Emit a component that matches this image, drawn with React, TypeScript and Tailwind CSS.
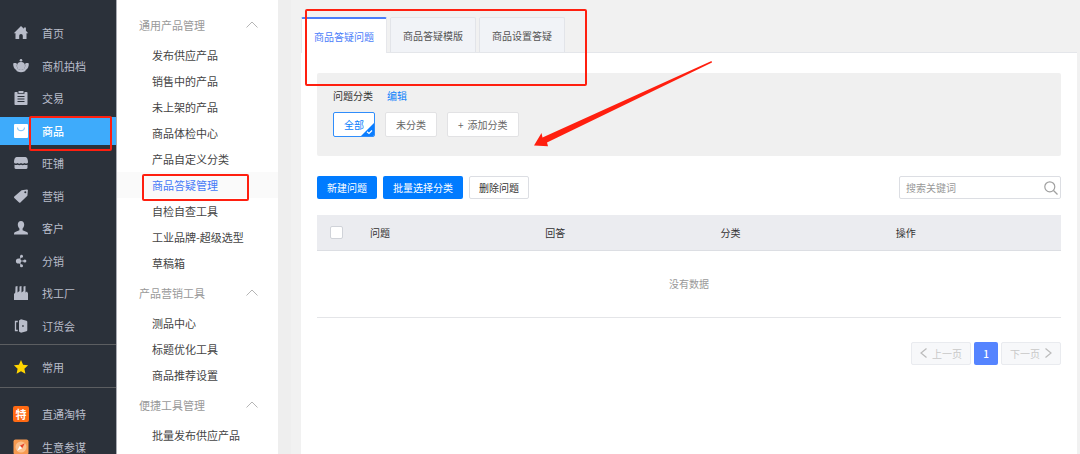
import { useState } from 'react';
import type { ReactNode } from 'react';
import clsx from 'clsx';

type NavItem = { label: string; icon: ReactNode };

const svgProps = { viewBox: '0 0 16 16', fill: 'currentColor', className: 'size-4 shrink-0', 'aria-hidden': true };

const mainNav: NavItem[] = [
  {
    label: '首页',
    icon: (
      <svg {...svgProps}>
        <path d="M8 1 .8 8.200h1.700V14h3.700v-3.200a1.800 1.800 0 0 1 3.600 0V14h3.700V8.200h1.700L12.900 5.800V2.400h-2v1.400z" />
      </svg>
    ),
  },
  {
    label: '商机拍档',
    icon: (
      <svg {...svgProps}>
        <circle cx="8" cy="2.200" r="1.300" />
        <circle cx="8" cy="8" r="4" />
        <path d="M.2 5.400c1.400-.7 3.200-.4 3.800.5-.8 2.700.4 5.500 4 6.300 3.600-.8 4.800-3.600 4-6.300.6-.9 2.400-1.200 3.800-.5.2 2.800-1 5.300-3.100 6.700H3.300C1.200 10.700 0 8.200.2 5.400z" />
        <path d="M3.300 12h9.400c0 1.400-2 2.200-4.700 2.200S3.300 13.400 3.300 12z" />
      </svg>
    ),
  },
  {
    label: '交易',
    icon: (
      <svg {...svgProps}>
        <path
          fillRule="evenodd"
          d="M2.300 2h2.200v1.800h7V2h2.200c.5 0 .8.300.8.800v11.400c0 .5-.3.800-.8.800H2.300c-.5 0-.8-.3-.8-.8V2.800c0-.5.300-.8.800-.8zm2.200 4v1h7V6zm0 2.500v1h7v-1zm0 2.500v1h7v-1z"
        />
        <path d="M5.500 1h5v2h-5z" />
      </svg>
    ),
  },
  {
    label: '商品',
    icon: (
      <svg {...svgProps}>
        <rect x="1" y="1" width="14" height="14" rx="1" />
        <path d="M4.500 4.500c.2 4.200 6.800 4.200 7 0" fill="none" stroke="#8ccbfa" strokeWidth="1.200" />
      </svg>
    ),
  },
  {
    label: '旺铺',
    icon: (
      <svg {...svgProps}>
        <path d="M3.500 2h9C14 2 15 4.500 15 7c0 1.600-2.200 2-3.500.9-1 1.100-2.600 1.100-3.500 0-.9 1.100-2.500 1.100-3.500 0C3.200 9 1 8.600 1 7c0-2.500 1-5 2.500-5z" />
        <path d="M1.500 9.800c1 .4 2.200.4 3 0 1 .6 2.500.6 3.500 0 1 .6 2.500.6 3.500 0 .8.400 2 .4 3 0v3c0 .7-.6 1.200-1.200 1.200H2.700c-.6 0-1.200-.5-1.200-1.200z" />
      </svg>
    ),
  },
  {
    label: '营销',
    icon: (
      <svg {...svgProps}>
        <path
          fillRule="evenodd"
          d="M8.600 2.200 14 1.500c.5 0 .9.300.9.800L14.400 7.700 7.400 14.500c-.4.400-.9.400-1.300 0L1.300 9.900c-.4-.4-.4-.9 0-1.300zM12.300 3.300a1 1 0 1 0 0 2 1 1 0 0 0 0-2z"
        />
      </svg>
    ),
  },
  {
    label: '客户',
    icon: (
      <svg {...svgProps}>
        <path d="M8 1c2 0 3.200 1.500 3.200 3.600 0 1.700-.7 3-1.600 3.900v1.700l4.200 1.700c.8.300 1.200.9 1.200 2.500H1c0-1.600.4-2.200 1.200-2.500l4.200-1.700V8.500c-.9-.9-1.600-2.200-1.600-3.900C4.800 2.500 6 1 8 1z" />
      </svg>
    ),
  },
  {
    label: '分销',
    icon: (
      <svg {...svgProps}>
        <circle cx="5.500" cy="8" r="2.600" />
        <circle cx="8.500" cy="3.200" r="1.500" />
        <circle cx="11.800" cy="8" r="1.600" />
        <circle cx="8.500" cy="12.800" r="1.500" />
        <path d="m8.500 3.200-3 4.800h6M5.500 8l3 4.800" fill="none" stroke="currentColor" strokeWidth=".9" />
      </svg>
    ),
  },
  {
    label: '找工厂',
    icon: (
      <svg {...svgProps}>
        <path d="M1 15V9l1.300-1.500L2.500 1.500 4.500 1v6.500l2-1.500V1.500L8.500 1v6.500l2-1.500V1.500l2-.5v6.500L14 6.500l1 2V15z" />
      </svg>
    ),
  },
  {
    label: '订货会',
    icon: (
      <svg {...svgProps}>
        <path
          fillRule="evenodd"
          d="m6 2.500 2-1.200 5.500 1.500c.5.200.8.500.8 1v8.400c0 .5-.3.800-.8 1L8 14.700l-2-1.200zm3.200 4.700v1.600h1.500V7.200z"
        />
        <path d="M4.800 3.500H2.500v9h2.300" fill="none" stroke="currentColor" strokeWidth="1.300" />
      </svg>
    ),
  },
];

const favoriteNav: NavItem[] = [
  {
    label: '常用',
    icon: (
      <svg viewBox="0 0 16 16" fill="#ffd500" className="size-4 shrink-0" aria-hidden>
        <path d="m8 1 2.100 4.700 5 .6-3.700 3.400 1 5.100L8 12.300l-4.400 2.500 1-5.100L.9 6.300l5-.6z" />
      </svg>
    ),
  },
];

const appNav: NavItem[] = [
  {
    label: '直通淘特',
    icon: (
      <span className="flex size-4 shrink-0 items-center justify-center rounded-xs bg-[#ff6a13] text-[11px] leading-none font-bold text-white">
        特
      </span>
    ),
  },
  {
    label: '生意参谋',
    icon: (
      <svg viewBox="0 0 16 16" className="size-4 shrink-0" aria-hidden>
        <rect x=".5" y=".5" width="15" height="15" rx="2" fill="#f79a50" />
        <circle cx="8" cy="8" r="5.500" fill="#fcc08c" />
        <path d="M11.800 4.200 9.200 9.200 6.800 6.800z" fill="#e8442c" />
        <path d="m4.200 11.800 2.600-5 2.400 2.400z" fill="#fff" />
      </svg>
    ),
  },
];

const menuGroups = [
  {
    title: '通用产品管理',
    items: [
      '发布供应产品',
      '销售中的产品',
      '未上架的产品',
      '商品体检中心',
      '产品自定义分类',
      '商品答疑管理',
      '自检自查工具',
      '工业品牌-超级选型',
      '草稿箱',
    ],
  },
  { title: '产品营销工具', items: ['测品中心', '标题优化工具', '商品推荐设置'] },
  { title: '便捷工具管理', items: ['批量发布供应产品'] },
];

const tabs = ['商品答疑问题', '商品答疑模版', '商品设置答疑'];
const columns = ['问题', '回答', '分类', '操作'];

function NavList({ items }: { items: NavItem[] }) {
  return (
    <ul>
      {items.map((item) => (
        <li key={item.label} className="odd:mb-[5px] even:mb-1">
          <a
            href="#"
            className={clsx(
              'flex h-7 items-center gap-3 pl-[13px] text-[11px]',
              item.label === '商品' ? 'bg-[#3eabfb] font-medium text-white' : 'text-[#b9bdca]',
            )}
          >
            {item.icon}
            <span className="pl-px">{item.label}</span>
          </a>
        </li>
      ))}
    </ul>
  );
}

function Sidebar() {
  return (
    <nav className="w-[117px] shrink-0 overflow-hidden border-r border-[#a9abb2] bg-[#2b313a] pt-[19px]">
      <NavList items={mainNav} />
      <div className="border-y border-[#5c5e61] pt-2 pb-px">
        <NavList items={favoriteNav} />
      </div>
      <div className="pt-3">
        <NavList items={appNav} />
      </div>
    </nav>
  );
}

function SubMenu() {
  return (
    <nav className="w-[161px] shrink-0 overflow-hidden bg-white pt-2 text-[11px]">
      {menuGroups.map((group) => (
        <section key={group.title}>
          <button type="button" className="flex h-[34px] w-full items-center justify-between pr-5 pl-[22px] text-[#999]">
            {group.title}
            <svg viewBox="0 0 12 8" className="h-2 w-3" fill="none" stroke="#b5b5b5" aria-hidden>
              <path d="M.5 6.500 6 1l5.500 5.500" />
            </svg>
          </button>
          <ul>
            {group.items.map((item) => (
              <li key={item}>
                <a
                  href="#"
                  className={clsx(
                    'flex h-[26px] items-center pl-[35px]',
                    item === '商品答疑管理' ? 'bg-[#fafafa] text-[#4479f7]' : 'text-[#444]',
                  )}
                >
                  {item}
                </a>
              </li>
            ))}
          </ul>
        </section>
      ))}
    </nav>
  );
}

function CategoryPanel() {
  return (
    <section className="rounded-xs bg-[#f0f0f0] px-4 pt-[15px] pb-[19px]">
      <div className="flex h-[15px] items-center gap-[14px]">
        <span className="text-[#333]">问题分类</span>
        <a href="#" className="text-[#0b80fb]">
          编辑
        </a>
      </div>
      <div className="mt-[9px] flex gap-[10px]">
        <button
          type="button"
          className="relative h-[25px] overflow-hidden rounded-xs border border-[#2f8dfb] bg-white px-[10px] text-[#0b80fb]"
        >
          全部
          <svg viewBox="0 0 13 13" className="absolute right-0 bottom-0 size-[13px]" aria-hidden>
            <path d="M13 0v13H0z" fill="#0a7dff" />
            <path d="m6 8.700 2 1.800 3-3" fill="none" stroke="#fff" strokeWidth="1.200" />
          </svg>
        </button>
        <button type="button" className="h-[25px] rounded-xs border border-[#e2e2e4] bg-white px-[10px] text-[#666]">
          未分类
        </button>
        <button
          type="button"
          className="flex h-[25px] items-center gap-1 rounded-xs border border-[#e2e2e4] bg-white px-[10px] text-[#666]"
        >
          <span>+</span>
          添加分类
        </button>
      </div>
    </section>
  );
}

function Toolbar() {
  return (
    <div className="mt-5 flex items-center justify-between">
      <div className="flex gap-[6px]">
        <button type="button" className="h-[23px] rounded-xs bg-[#007bff] px-[10px] text-white">
          新建问题
        </button>
        <button type="button" className="h-[23px] rounded-xs bg-[#007bff] px-[10px] text-white">
          批量选择分类
        </button>
        <button type="button" className="h-[23px] rounded-xs border border-[#dcdee3] bg-white px-[9px] text-[#333]">
          删除问题
        </button>
      </div>
      <label className="flex h-[23px] w-[162px] items-center rounded-xs border border-[#dcdee3] bg-white pr-[2px] pl-[6px]">
        <input
          type="search"
          aria-label="搜索关键词"
          placeholder="搜索关键词"
          className="min-w-0 flex-1 outline-none placeholder:text-[#999]"
        />
        <svg viewBox="0 0 14 14" className="size-[14px]" fill="none" stroke="#a0a0a0" strokeWidth="1.200" aria-hidden>
          <circle cx="5.800" cy="5.800" r="5" />
          <path d="m9.500 9.500 4 4" />
        </svg>
      </label>
    </div>
  );
}

function QuestionTable() {
  return (
    <table className="mt-4 w-full table-fixed text-left">
      <thead>
        <tr className="h-[35px] border-b border-[#dcdee3] bg-[#ebecf0]">
          <th className="w-[43px] pl-[13px]">
            <input
              type="checkbox"
              aria-label="全选"
              className="block size-[13px] appearance-none rounded-xs border border-[#d0d3d9] bg-white"
            />
          </th>
          {columns.map((name) => (
            <th key={name} className="px-[10px] font-normal text-[#333]">
              {name}
            </th>
          ))}
        </tr>
      </thead>
      <tbody>
        <tr className="h-[67px] border-b border-[#e4e5e8]">
          <td colSpan={5} className="text-center text-[#999]">
            没有数据
          </td>
        </tr>
      </tbody>
    </table>
  );
}

function Pagination() {
  const pageButton =
    'flex h-[23px] w-[60px] items-center justify-center gap-[5px] rounded-xs border border-[#e9ebef] bg-[#f7f8fa] text-[#c8c8c8]';
  return (
    <div className="mt-6 flex justify-end gap-[3px]">
      <button type="button" disabled className={pageButton}>
        <svg viewBox="0 0 7 10" className="h-[10px] w-[7px]" fill="none" stroke="#bbb" strokeWidth="1.200" aria-hidden>
          <path d="M6.500.5 1 5l5.500 4.500" />
        </svg>
        上一页
      </button>
      <button type="button" className="h-[23px] w-6 rounded-xs bg-[#5584ff] font-medium text-white">
        1
      </button>
      <button type="button" disabled className={pageButton}>
        下一页
        <svg viewBox="0 0 7 10" className="h-[10px] w-[7px]" fill="none" stroke="#bbb" strokeWidth="1.200" aria-hidden>
          <path d="M.5.5 6 5 .5 9.500" />
        </svg>
      </button>
    </div>
  );
}

// red guide marks drawn over the page
function Annotations() {
  return (
    <svg className="pointer-events-none absolute top-0 left-0 z-20" width="720" height="210" fill="none" aria-hidden>
      <g stroke="#ff1f0f" strokeWidth="2">
        <rect x="30" y="117" width="81" height="33" rx="1" />
        <rect x="143" y="175" width="105" height="25" rx="1" />
        <rect x="306" y="10" width="280" height="75" rx="1" />
      </g>
      <path d="M711.500 61 712 62.500 547 142.500 548 146.200 534 145.500 541.500 133 542.500 137.500z" fill="#ff1f0f" />
    </svg>
  );
}

export default function App() {
  const [activeTab, setActiveTab] = useState(tabs[0]);

  return (
    <div className="relative flex h-screen overflow-hidden bg-[#f1f1f1] font-['Noto_Sans_CJK_SC',sans-serif]">
      <Sidebar />
      <SubMenu />
      <div className="w-[13px] shrink-0 bg-[#eee]" />
      <main className="flex min-w-0 flex-1 flex-col pt-[17px] pr-[3px] pl-[10px] text-[10px]">
        <div role="tablist" className="flex gap-[3px]">
          {tabs.map((tab) => (
            <button
              key={tab}
              type="button"
              role="tab"
              aria-selected={activeTab === tab}
              onClick={() => setActiveTab(tab)}
              className={clsx(
                'rounded-t-xs border-x border-t px-3',
                activeTab === tab
                  ? 'z-10 -mb-px h-9 border-x-[#e6e7eb] border-t-2 border-t-[#4a7dfa] bg-white text-[#4a7dfa]'
                  : 'h-[35px] border-[#e2e4e9] bg-[#f1f3f7] text-[#555]',
              )}
            >
              {tab}
            </button>
          ))}
        </div>
        <div className="flex-1 border-t border-[#e4e6ea] bg-white px-4 pt-5">
          <CategoryPanel />
          <Toolbar />
          <QuestionTable />
          <Pagination />
        </div>
      </main>
      <Annotations />
    </div>
  );
}
